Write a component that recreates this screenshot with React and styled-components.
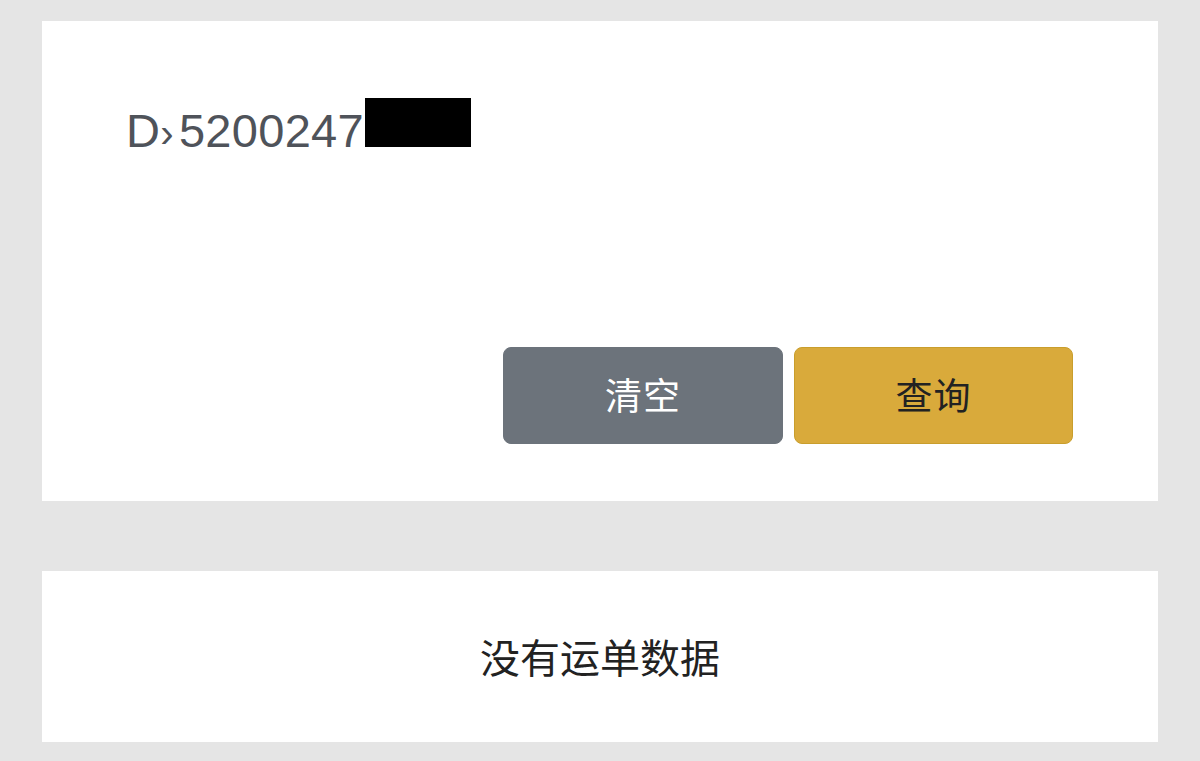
import React from "react";
import styled, { createGlobalStyle } from "styled-components";

const Global = createGlobalStyle`
  html, body { margin: 0; padding: 0; background: #e5e5e5; }
  body { font-family: "Liberation Sans", "Noto Sans CJK SC", sans-serif; }
`;

const Page = styled.div`
  display: flex;
  flex-direction: column;
  gap: 70px;
  padding: 21px 42px 19px;
  min-height: 761px;
  box-sizing: border-box;
`;

const Card = styled.section`
  background: #ffffff;
  box-sizing: border-box;
`;

const FormCard = styled(Card)`
  height: 480px;
  display: flex;
  flex-direction: column;
  justify-content: space-between;
  padding: 76px 85px 57px 84px;
`;

const IdLine = styled.div`
  display: flex;
  align-items: flex-end;
  height: 50px;
  font-family: "Liberation Sans", Arial, sans-serif;
  font-size: 47px;
  line-height: 47px;
  color: #4f535a;
  letter-spacing: 0.3px;
  white-space: pre;
`;

const Text = styled.span`
  display: inline-block;
  margin-bottom: -7px;
`;

const Sep = styled(Text)`
  font-size: 40px;
  line-height: 40px;
  margin-bottom: -6px;
  margin-right: 5px;
`;

const Redacted = styled.span`
  display: inline-block;
  width: 106px;
  height: 49px;
  background: #000;
  margin-left: 1px;
`;

const Actions = styled.div`
  display: flex;
  justify-content: flex-end;
  gap: 11px;
`;

const Button = styled.button`
  width: ${(p) => (p.$primary ? "279px" : "280px")};
  height: 97px;
  border-radius: 8px;
  border: 1px solid ${(p) => (p.$primary ? "#c99e2c" : "#6c737b")};
  background: ${(p) => (p.$primary ? "#d9aa3b" : "#6c737b")};
  color: ${(p) => (p.$primary ? "#222222" : "#ffffff")};
  font-family: "Noto Sans CJK SC", sans-serif;
  font-size: 37px;
  letter-spacing: 1px;
  cursor: pointer;
  padding: 0 0 4px;
`;

const EmptyCard = styled(Card)`
  height: 171px;
  display: flex;
  align-items: center;
  justify-content: center;
  font-family: "Noto Sans CJK SC", sans-serif;
  font-size: 40px;
  color: #222222;
  padding-bottom: 2px;
`;

export default function App() {
  return (
    <>
      <Global />
      <Page>
        <FormCard>
          <IdLine>
            <Text>D</Text>
            <Sep>›</Sep>
            <Text>5200247</Text>
            <Redacted />
          </IdLine>
          <Actions>
            <Button>清空</Button>
            <Button $primary>查询</Button>
          </Actions>
        </FormCard>
        <EmptyCard>没有运单数据</EmptyCard>
      </Page>
    </>
  );
}
